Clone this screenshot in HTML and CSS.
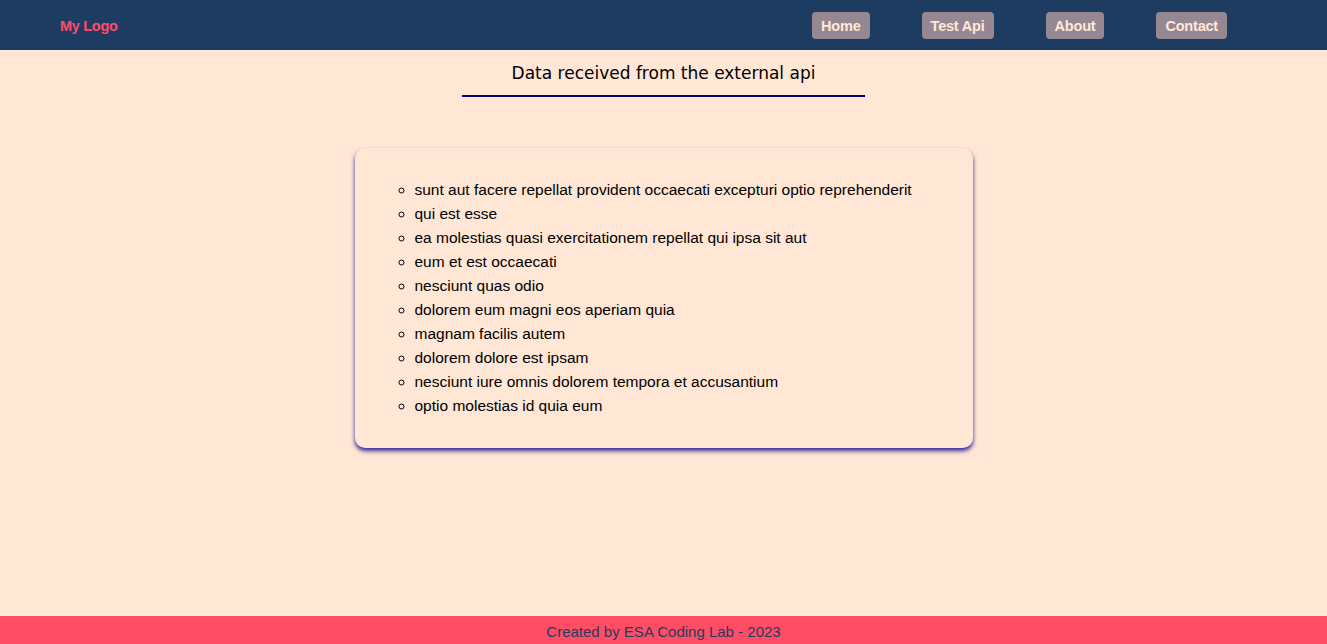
FILE: index.html
```html
<!DOCTYPE html>
<html lang="en">
<head>
<meta charset="utf-8">
<title>Api Data</title>
<link rel="stylesheet" href="styles.css">
</head>
<body>
<header class="topbar">
  <a class="logo" href="#">My Logo</a>
  <nav class="nav">
    <a class="nav-btn" href="#">Home</a>
    <a class="nav-btn" href="#">Test Api</a>
    <a class="nav-btn" href="#">About</a>
    <a class="nav-btn" href="#">Contact</a>
  </nav>
</header>
<main class="content">
  <h2 class="title">Data received from the external api</h2>
  <div class="card">
    <ul class="posts">
      <li>sunt aut facere repellat provident occaecati excepturi optio reprehenderit</li>
      <li>qui est esse</li>
      <li>ea molestias quasi exercitationem repellat qui ipsa sit aut</li>
      <li>eum et est occaecati</li>
      <li>nesciunt quas odio</li>
      <li>dolorem eum magni eos aperiam quia</li>
      <li>magnam facilis autem</li>
      <li>dolorem dolore est ipsam</li>
      <li>nesciunt iure omnis dolorem tempora et accusantium</li>
      <li>optio molestias id quia eum</li>
    </ul>
  </div>
</main>
<footer class="footer">Created by ESA Coding Lab - 2023</footer>
</body>
</html>
```

FILE: styles.css
```css
html, body {
  margin: 0;
  padding: 0;
}
body {
  min-height: 100vh;
  display: flex;
  flex-direction: column;
  background: #ffe6d5;
  font-family: "Liberation Sans", Arial, sans-serif;
  color: #000;
}
.topbar {
  height: 50px;
  background: #1e3c62;
  display: flex;
  align-items: center;
  justify-content: space-between;
  padding: 1px 100px 0 60px;
  box-sizing: border-box;
}
.logo {
  color: #ff4d66;
  font-weight: bold;
  font-size: 14.5px;
  text-decoration: none;
  letter-spacing: -0.3px;
}
.nav {
  display: flex;
  gap: 52px;
}
.nav-btn {
  display: block;
  background: #958892;
  color: #ffe8d8;
  font-weight: bold;
  font-size: 14.5px;
  line-height: 26px;
  padding: 1px 9px 0;
  border-radius: 4px;
  text-decoration: none;
  letter-spacing: -0.2px;
}
.content {
  flex: 1;
  display: flex;
  flex-direction: column;
  align-items: center;
}
.title {
  margin: 10px 0 0;
  font-family: "DejaVu Sans", sans-serif;
  font-weight: normal;
  font-size: 17px;
  line-height: 26px;
  text-align: center;
  padding-bottom: 9px;
  border-bottom: 2px solid #00007f;
  box-sizing: border-box;
  width: 403px;
}
.card {
  margin-top: 51px;
  width: 618px;
  box-sizing: border-box;
  padding: 14px 20px;
  border-radius: 10px;
  box-shadow: 0 3px 4px rgba(40, 30, 150, 0.95);
}
.posts {
  margin: 16px 0;
  padding-left: 40px;
  list-style-type: circle;
}
.posts li {
  font-size: 15.5px;
  line-height: 24px;
}
.footer {
  height: 28px;
  line-height: 31px;
  background: #ff4d65;
  color: #1e3c62;
  text-align: center;
  font-size: 15px;
}
```
